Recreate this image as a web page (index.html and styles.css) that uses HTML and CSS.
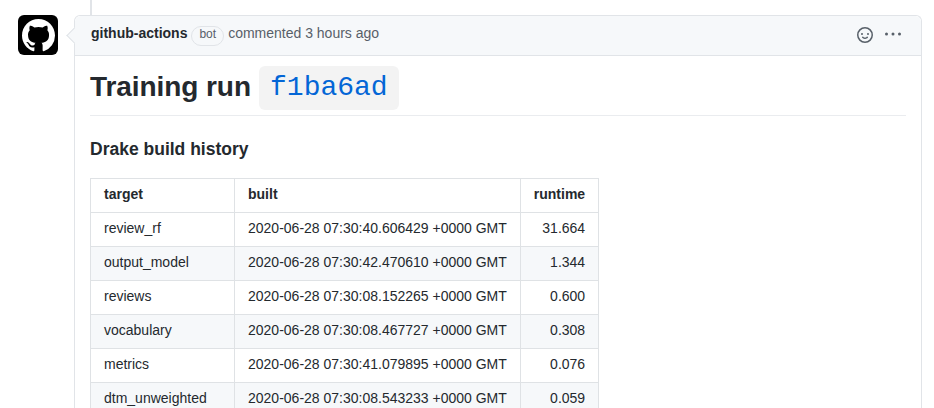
FILE: index.html
```html
<!DOCTYPE html>
<html lang="en">
<head>
<meta charset="utf-8">
<title>Training run</title>
<link rel="stylesheet" href="styles.css">
</head>
<body>
<div class="timeline">
  <div class="avatar">
    <svg viewBox="0 0 16 16" width="33" height="33"><path fill="#fff" d="M8 0C3.58 0 0 3.58 0 8c0 3.54 2.29 6.53 5.47 7.59.4.07.55-.17.55-.38 0-.19-.01-.82-.01-1.49-2.01.37-2.53-.49-2.69-.94-.09-.23-.48-.94-.82-1.13-.28-.15-.68-.52-.01-.53.63-.01 1.08.58 1.23.82.72 1.21 1.87.87 2.33.66.07-.52.28-.87.51-1.07-1.78-.2-3.64-.89-3.64-3.95 0-.87.31-1.59.82-2.15-.08-.2-.36-1.02.08-2.12 0 0 .67-.21 2.2.82.64-.18 1.32-.27 2-.27s1.36.09 2 .27c1.53-1.04 2.2-.82 2.2-.82.44 1.1.16 1.92.08 2.12.51.56.82 1.27.82 2.15 0 3.07-1.87 3.75-3.65 3.95.29.25.54.73.54 1.48 0 1.07-.01 1.93-.01 2.2 0 .21.15.46.55.38A8.01 8.01 0 0 0 16 8c0-4.42-3.58-8-8-8z"/></svg>
  </div>
  <div class="comment">
    <header class="head">
      <strong class="author">github-actions</strong>
      <span class="label">bot</span>
      <span class="meta">commented 3 hours ago</span>
      <span class="actions">
        <svg viewBox="0 0 16 16" width="16" height="16"><path fill="#586069" fill-rule="evenodd" d="M1.5 8a6.5 6.5 0 1 1 13 0 6.5 6.5 0 0 1-13 0zM8 0a8 8 0 1 0 0 16A8 8 0 0 0 8 0zM5 8a1 1 0 1 0 0-2 1 1 0 0 0 0 2zm7-1a1 1 0 1 1-2 0 1 1 0 0 1 2 0zM5.32 9.636a.75.75 0 0 1 1.038.175l.007.009c.103.118.22.222.35.31.264.178.683.37 1.285.37.602 0 1.02-.192 1.285-.371.13-.088.247-.192.35-.31l.007-.008a.75.75 0 0 1 1.222.87l-.614-.431c.614.43.614.431.613.431v.001l-.001.002-.002.003-.005.007-.014.019a2.066 2.066 0 0 1-.184.213c-.16.166-.338.316-.53.445-.63.418-1.37.638-2.127.629-.946 0-1.652-.308-2.126-.63a3.331 3.331 0 0 1-.715-.657l-.014-.02-.005-.006-.002-.003v-.002h-.001l.613-.432-.614.43a.75.75 0 0 1 .183-1.044z"/></svg>
        <svg class="dots" viewBox="0 0 16 4" width="16" height="4"><g fill="#586069"><circle cx="1.5" cy="2" r="1.5"/><circle cx="8" cy="2" r="1.5"/><circle cx="14.5" cy="2" r="1.5"/></g></svg>
      </span>
    </header>
    <div class="body">
      <h1>Training run <code>f1ba6ad</code></h1>
      <h3>Drake build history</h3>
      <table>
        <thead><tr><th class="target">target</th><th>built</th><th class="num">runtime</th></tr></thead>
        <tbody>
          <tr><td>review_rf</td><td>2020-06-28 07:30:40.606429 +0000 GMT</td><td class="num">31.664</td></tr>
          <tr><td>output_model</td><td>2020-06-28 07:30:42.470610 +0000 GMT</td><td class="num">1.344</td></tr>
          <tr><td>reviews</td><td>2020-06-28 07:30:08.152265 +0000 GMT</td><td class="num">0.600</td></tr>
          <tr><td>vocabulary</td><td>2020-06-28 07:30:08.467727 +0000 GMT</td><td class="num">0.308</td></tr>
          <tr><td>metrics</td><td>2020-06-28 07:30:41.079895 +0000 GMT</td><td class="num">0.076</td></tr>
          <tr><td>dtm_unweighted</td><td>2020-06-28 07:30:08.543233 +0000 GMT</td><td class="num">0.059</td></tr>
        </tbody>
      </table>
    </div>
  </div>
</div>
</body>
</html>
```
FILE: styles.css
```css
* { box-sizing: border-box; }
body {
  margin: 0;
  height: 408px;
  overflow: hidden;
  background: #fff;
  color: #24292e;
  font: 14px/21px "Liberation Sans", Arial, sans-serif;
}
.timeline {
  position: relative;
  display: flex;
  align-items: flex-start;
  gap: 16px;
  height: 408px;
  padding: 15px 12px 0 18px;
}
.timeline::before {
  content: "";
  position: absolute;
  left: 90px;
  top: 0;
  width: 2px;
  height: 15px;
  background: #e1e4e8;
}
.avatar {
  flex: none;
  display: grid;
  place-items: center;
  width: 40px;
  height: 40px;
  border-radius: 6px;
  background: #000;
}
.avatar svg { margin-top: 1px; }
.comment {
  position: relative;
  flex: 1;
  min-width: 0;
  height: 393px;
  border: 1px solid #e1e4e8;
  border-bottom: 0;
  border-radius: 6px 6px 0 0;
}
.comment::before {
  content: "";
  position: absolute;
  left: -6.5px;
  top: 13px;
  width: 12px;
  height: 12px;
  transform: rotate(45deg);
  background: #f6f8fa;
  border: solid #e1e4e8;
  border-width: 0 0 1px 1px;
}
.head {
  position: relative;
  display: flex;
  align-items: center;
  height: 40px;
  padding: 0 20px 4px 16px;
  border-bottom: 1px solid #e1e4e8;
  border-radius: 6px 6px 0 0;
  background: #f6f8fa;
  color: #586069;
}
.author { color: #24292e; }
.label {
  margin: 4px 4px 0;
  padding: 0 7px 4px;
  border: 1px solid #e1e4e8;
  border-radius: 20px;
  font-size: 12px;
  line-height: 14px;
}
.actions {
  display: flex;
  align-items: center;
  gap: 12px;
  margin: 3px 0 0 auto;
}
.dots { margin-top: -2px; }
.body {
  height: 352px;
  overflow: hidden;
  padding: 10px 15px 0;
}
h1 {
  height: 50px;
  margin: 0 0 23px;
  border-bottom: 1px solid #eaecef;
  font-size: 28px;
  line-height: 42px;
  letter-spacing: -0.07px;
}
code {
  padding: 6px 11.4px 7px;
  border-radius: 6px;
  background: #f3f3f3;
  color: #0366d6;
  font: 28px "Liberation Mono", monospace;
  letter-spacing: 0;
  vertical-align: 1px;
}
h3 {
  margin: 0 0 19px;
  font-size: 17.5px;
  line-height: 20px;
}
table { border-collapse: collapse; }
th, td {
  height: 34px;
  padding: 0 13px 2px;
  border: 1px solid #dfe2e5;
  text-align: left;
}
.target { width: 144px; }
tbody tr:nth-child(even) { background: #f6f8fa; }
.num { text-align: right; }
```
